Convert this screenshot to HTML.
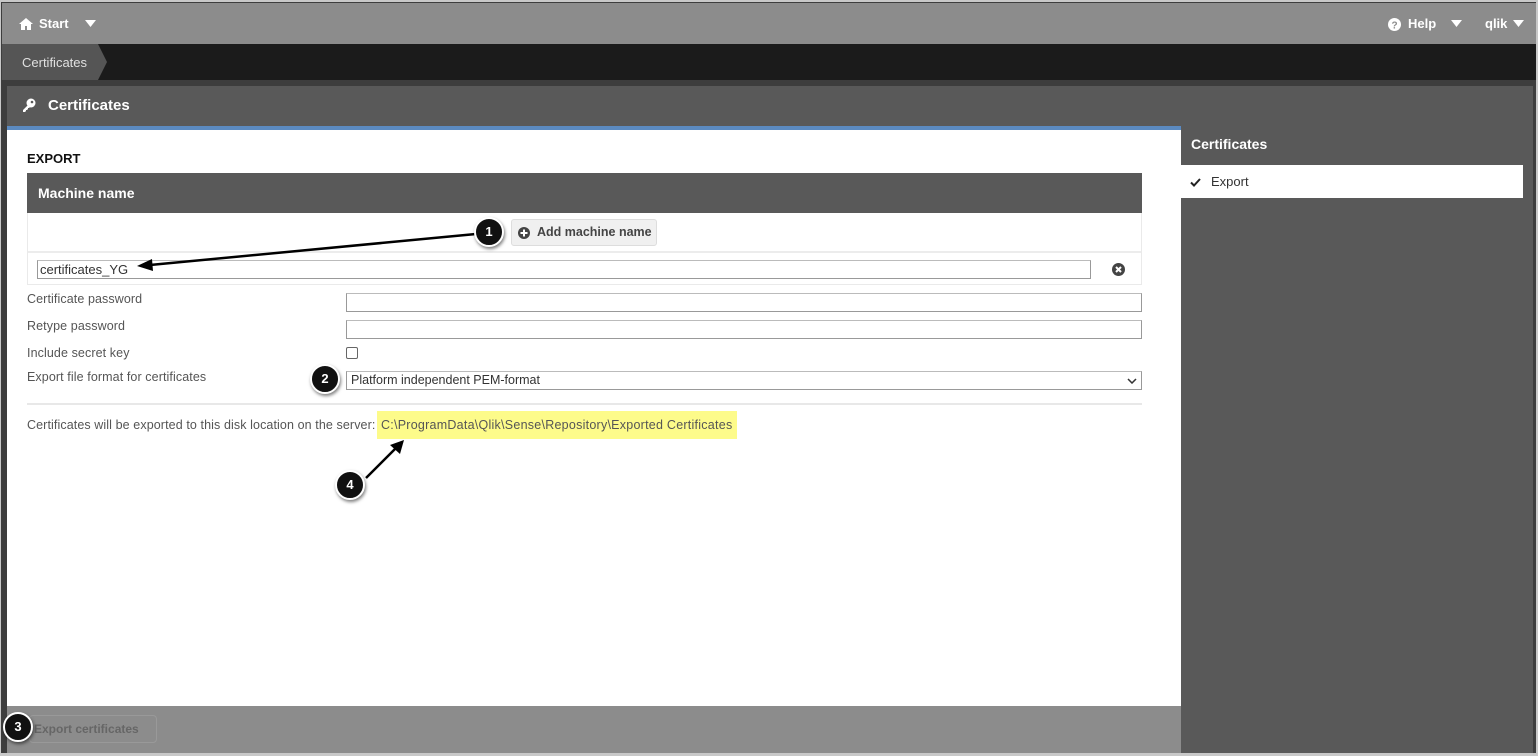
<!DOCTYPE html>
<html><head><meta charset="utf-8"><style>
*{box-sizing:border-box;margin:0;padding:0}
body{width:1538px;height:756px;background:#c8c8c8;position:relative;overflow:hidden;font-family:"Liberation Sans",sans-serif}
.abs{position:absolute}
.frame{left:1px;top:2px;width:1535px;height:751px;background:#3d3d3d}
.top{left:2px;top:3px;width:1534px;height:41px;background:#8c8c8c;color:#fff;font-weight:bold;font-size:13px}
.crumbbar{left:2px;top:44px;width:1534px;height:36px;background:#1b1b1b}
.hdr{left:7px;top:86px;width:1526px;height:40px;background:#595959;color:#fff;font-weight:bold;font-size:15px}
.blue{left:7px;top:126px;width:1174px;height:4px;background:#5b8ac0}
.content{left:7px;top:130px;width:1174px;height:576px;background:#fff}
.side{left:1181px;top:126px;width:352px;height:627px;background:#595959}
.foot{left:7px;top:706px;width:1174px;height:47px;background:#8c8c8c}
.lbl{font-size:12.5px;color:#555;left:27px;letter-spacing:0.1px}
.inp{border:1px solid #999;border-top-color:#bbb;background:#fff;height:19px}
.badge{width:30px;height:30px;border-radius:50%;background:#111;border:2px solid #fff;box-shadow:1px 2px 3px rgba(0,0,0,.5);color:#fff;font-weight:bold;font-size:13px;text-align:center;line-height:26px}
</style></head><body>
<div class="abs frame"></div>
<div class="abs top">
  <svg class="abs" style="left:17px;top:15px" width="14" height="12" viewBox="0 0 14 12"><path d="M7 0L0 6h2v6h4V8h2v4h4V6h2z" fill="#fff"/></svg>
  <span class="abs" style="left:37px;top:13px">Start</span>
  <svg class="abs" style="left:83px;top:17px" width="11" height="8"><path d="M0 0h11L5.5 7z" fill="#fff"/></svg>
  <svg class="abs" style="left:1386px;top:15px" width="13" height="13"><circle cx="6.5" cy="6.5" r="6.5" fill="#fff"/><text x="6.5" y="10.5" font-size="10" font-weight="bold" text-anchor="middle" fill="#8c8c8c" font-family="Liberation Sans">?</text></svg>
  <span class="abs" style="left:1406px;top:13px">Help</span>
  <svg class="abs" style="left:1449px;top:17px" width="11" height="8"><path d="M0 0h11L5.5 7z" fill="#fff"/></svg>
  <span class="abs" style="left:1483px;top:13px">qlik</span>
  <svg class="abs" style="left:1511px;top:17px" width="11" height="8"><path d="M0 0h11L5.5 7z" fill="#fff"/></svg>
</div>
<div class="abs crumbbar">
  <svg class="abs" style="left:0;top:0" width="110" height="36"><path d="M0 0H96L105 18L96 36H0z" fill="#555"/></svg>
  <span class="abs" style="left:20px;top:11px;color:#e0e0e0;font-size:13px">Certificates</span>
</div>
<div class="abs hdr">
  <svg class="abs" style="left:15px;top:12px" width="14" height="15" viewBox="0 0 14 15"><circle cx="9" cy="5" r="4.5" fill="#fff"/><circle cx="10" cy="4" r="1.3" fill="#595959"/><path d="M6 7L1 12v2h2l1-1v-1h1l1-1v-1h1l1-1z" fill="#fff"/></svg>
  <span class="abs" style="left:41px;top:11px">Certificates</span>
</div>
<div class="abs blue"></div>
<div class="abs content"></div>
<div class="abs side">
  <span class="abs" style="left:10px;top:10px;color:#fff;font-weight:bold;font-size:14px">Certificates</span>
  <div class="abs" style="left:0;top:39px;width:342px;height:33px;background:#fff">
    <svg class="abs" style="left:9px;top:13px" width="11" height="9"><path d="M1 4.5L4 7.5L10 1" stroke="#222" stroke-width="2" fill="none"/></svg>
    <span class="abs" style="left:30px;top:9px;font-size:13px;color:#333">Export</span>
  </div>
</div>
<div class="abs foot">
  <div class="abs" style="left:22px;top:9px;width:128px;height:28px;border:1px solid #999;border-radius:4px;color:#666;font-weight:bold;font-size:12px;line-height:26px;padding-left:4px">Export certificates</div>
</div>
<div class="abs badge" style="left:3px;top:712px">3</div>

<span class="abs" style="left:27px;top:151px;font-weight:bold;font-size:13px;color:#111">EXPORT</span>
<div class="abs" style="left:27px;top:173px;width:1115px;height:40px;background:#595959;color:#fff;font-weight:bold;font-size:14px;padding:12px 0 0 11px">Machine name</div>
<div class="abs" style="left:27px;top:213px;width:1115px;height:72px;border:1px solid #eaeaea;border-top:none;background:#fff"></div>
<div class="abs" style="left:28px;top:251px;width:1113px;height:2px;background:#ececec"></div>
<div class="abs" style="left:511px;top:219px;width:146px;height:27px;background:#f0f0f0;border:1px solid #ddd;border-radius:3px;font-weight:bold;font-size:12.5px;color:#444;line-height:25px;padding-left:25px">Add machine name
  <svg class="abs" style="left:6px;top:7px" width="12" height="12"><circle cx="6" cy="6" r="6" fill="#444"/><path d="M6 2.5v7M2.5 6h7" stroke="#fff" stroke-width="2"/></svg></div>
<div class="abs inp" style="left:37px;top:260px;width:1054px;color:#333;font-size:13px;padding-left:2px;line-height:17px">certificates_YG</div>
<svg class="abs" style="left:1112px;top:263px" width="13" height="13"><circle cx="6.5" cy="6.5" r="6.5" fill="#444"/><path d="M4 4l5 5M9 4l-5 5" stroke="#fff" stroke-width="2"/></svg>

<span class="abs lbl" style="top:292px">Certificate password</span>
<div class="abs inp" style="left:346px;top:293px;width:796px"></div>
<span class="abs lbl" style="top:319px">Retype password</span>
<div class="abs inp" style="left:346px;top:320px;width:796px"></div>
<span class="abs lbl" style="top:346px">Include secret key</span>
<div class="abs" style="left:346px;top:347px;width:12px;height:12px;border:1px solid #666;border-radius:2px"></div>
<span class="abs lbl" style="top:370px">Export file format for certificates</span>
<div class="abs inp" style="left:346px;top:371px;width:796px;font-size:12.5px;color:#333;padding-left:4px;line-height:17px">Platform independent PEM-format
  <svg class="abs" style="right:4px;top:6px" width="10" height="6"><path d="M1 1l4 4 4-4" stroke="#333" stroke-width="1.5" fill="none"/></svg></div>
<div class="abs" style="left:27px;top:403px;width:1115px;height:2px;background:#e8e8e8"></div>
<span class="abs lbl" style="top:418px">Certificates will be exported to this disk location on the server:</span>
<div class="abs" style="left:377px;top:411px;width:360px;height:28px;background:#fdfb8a"></div>
<span class="abs" style="left:381px;top:418px;font-size:12.5px;color:#555;letter-spacing:0.25px">C:\ProgramData\Qlik\Sense\Repository\Exported Certificates</span>

<svg class="abs" style="left:0;top:0" width="1538" height="756">
  <line x1="476" y1="234" x2="150" y2="265" stroke="#000" stroke-width="2.5"/>
  <path d="M137 266L152 259L153 271z" fill="#000"/>
  <line x1="366" y1="478" x2="396" y2="448" stroke="#000" stroke-width="2.5"/>
  <path d="M404 440L400 454L390 445z" fill="#000"/>
</svg>
<div class="abs badge" style="left:474px;top:217px">1</div>
<div class="abs badge" style="left:310px;top:364px">2</div>
<div class="abs badge" style="left:335px;top:470px">4</div>
</body></html>
